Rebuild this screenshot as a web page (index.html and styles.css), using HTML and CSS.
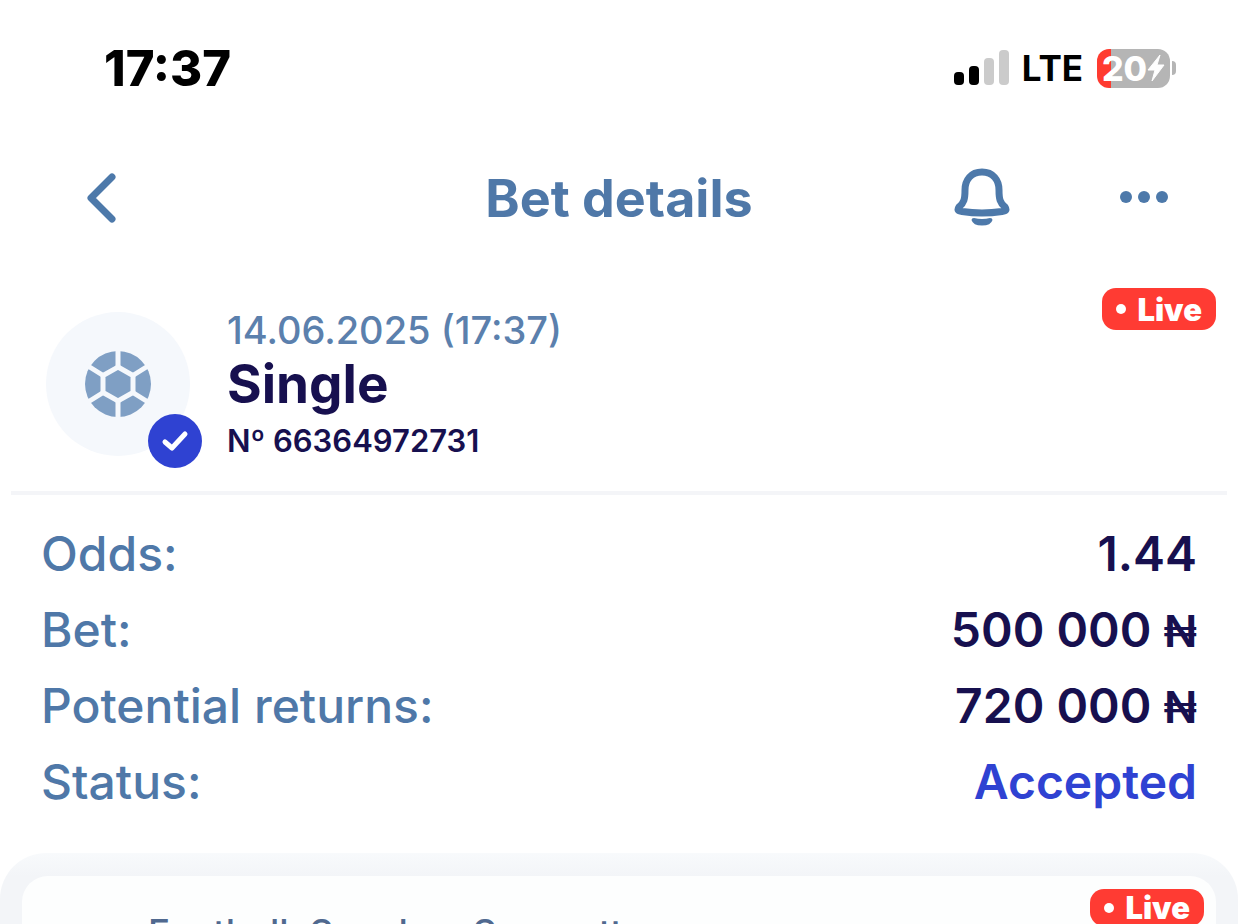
FILE: index.html
```html
<!DOCTYPE html>
<html lang="en">

<head>
    <meta charset="UTF-8">
    <meta name="viewport" content="width=device-width, initial-scale=1.0">
    <title>Bet details</title>
    <link rel="stylesheet" href="styles.css">
</head>

<body>
    <div class="page">
        <div class="status-bar">
            <span class="clock">17:37</span>
            <div class="indicators">
                <svg class="signal" viewBox="0 0 56 36" width="56" height="36">
                    <rect x="0" y="22" width="10" height="13" rx="4" fill="#000"/>
                    <rect x="15" y="16" width="10" height="19" rx="4" fill="#000"/>
                    <rect x="30" y="8" width="10" height="27" rx="4" fill="#cbcbcb"/>
                    <rect x="45" y="0" width="10" height="35" rx="4" fill="#cbcbcb"/>
                </svg>
                <span class="network">LTE</span>
                <div class="battery">
                    <div class="battery-body">
                        <span>20</span>
                        <svg viewBox="0 0 18 28" width="18" height="28">
                            <path d="M13 1 L1 16 H8 L5 27 L17 11 H10 Z" fill="#fff" stroke="#fff" stroke-linejoin="round"/>
                        </svg>
                    </div>
                    <div class="battery-cap"></div>
                </div>
            </div>
        </div>

        <header class="header">
            <button class="icon-button back" type="button" aria-label="Back">
                <svg viewBox="0 0 32 52" width="32" height="52">
                    <path d="M26 5 L5 26 L26 47" fill="none" stroke="#4d79aa" stroke-width="7" stroke-linecap="round" stroke-linejoin="round"/>
                </svg>
            </button>
            <h1>Bet details</h1>
            <div class="header-actions">
                <button class="icon-button" type="button" aria-label="Notifications">
                    <svg viewBox="0 0 56 60" width="56" height="60">
                        <path d="M28 4 C17 4 11 12 11 22 C11 31 10 35 5 39 C3 42 4 43 8 43.500 Q28 46.500 48 43.500 C52 43 53 42 51 39 C46 35 45 31 45 22 C45 12 39 4 28 4 Z" fill="none" stroke="#4d79aa" stroke-width="7" stroke-linejoin="round"/>
                        <path d="M20 50 Q28 52 36 50 Q38.500 50 38.500 52 Q37 57.500 28 57.500 Q19 57.500 17.500 52 Q17.500 50 20 50 Z" fill="#4d79aa"/>
                    </svg>
                </button>
                <button class="icon-button" type="button" aria-label="More">
                    <svg viewBox="0 0 48 14" width="48" height="14">
                        <circle cx="6" cy="6" r="6" fill="#4d79aa"/>
                        <circle cx="24" cy="6" r="6" fill="#4d79aa"/>
                        <circle cx="42" cy="6" r="6" fill="#4d79aa"/>
                    </svg>
                </button>
            </div>
        </header>

        <section class="summary">
            <div class="sport">
                <svg viewBox="0 0 68 68" width="68" height="68">
                    <circle cx="34" cy="34" r="33" fill="#7f9fc4"/>
                    <path d="M34 18 V0 M34 50 V68 M20 26 L4 16 M48 26 L64 16 M20 42 L4 52 M48 42 L64 52" stroke="#f5f8fc" stroke-width="5"/>
                    <path d="M34 17 L49 25.500 V42.500 L34 51 L19 42.500 V25.500 Z" fill="#7f9fc4" stroke="#f5f8fc" stroke-width="5"/>
                </svg>
                <div class="sport-check">
                    <svg viewBox="0 0 28 22" width="28" height="22">
                        <path d="M4 12 L11 18 L24 4" fill="none" stroke="#fff" stroke-width="5" stroke-linecap="round" stroke-linejoin="round"/>
                    </svg>
                </div>
            </div>
            <div class="summary-text">
                <p class="date">14.06.2025 (17:37)</p>
                <h2>Single</h2>
                <p class="number">Nº 66364972731</p>
            </div>
            <span class="live">Live</span>
        </section>

        <dl class="details">
            <div class="row">
                <dt>Odds:</dt>
                <dd>1.44</dd>
            </div>
            <div class="row">
                <dt>Bet:</dt>
                <dd>500 000 <span class="currency">₦</span></dd>
            </div>
            <div class="row">
                <dt>Potential returns:</dt>
                <dd>720 000 <span class="currency">₦</span></dd>
            </div>
            <div class="row">
                <dt>Status:</dt>
                <dd class="accepted">Accepted</dd>
            </div>
        </dl>

        <section class="events">
            <div class="event">
                <p class="league">Football. Sweden. Superettan</p>
                <span class="live live-small">Live</span>
            </div>
        </section>
    </div>
</body>

</html>
```

FILE: styles.css
```css
* {
    box-sizing: border-box;
}

body {
    margin: 0;
    background-color: #fff;
    font-family: Inter, "Liberation Sans", sans-serif;
    color: #17104f;
}

h1,
h2,
p,
dl,
dd {
    margin: 0;
}

.page {
    height: 100vh;
    overflow: hidden;
}

.status-bar {
    display: flex;
    justify-content: space-between;
    align-items: center;
    height: 136px;
    padding: 0 62px 0 104px;
    color: #000;
}

.clock {
    font-size: 49px;
    font-weight: 800;
}

.indicators {
    display: flex;
    align-items: center;
}

.network {
    margin: 0 14px 0 12px;
    font-size: 35px;
    font-weight: 700;
}

.battery {
    display: flex;
    align-items: center;
    gap: 2px;
}

.battery-body {
    display: flex;
    align-items: center;
    justify-content: center;
    width: 73px;
    height: 39px;
    border-radius: 12px;
    background: linear-gradient(to right, #ff3b30 14px, #b5b5b5 14px);
    color: #fff;
    font-size: 34px;
    font-weight: 800;
}

.battery-cap {
    width: 4px;
    height: 14px;
    border-radius: 0 6px 6px 0;
    background-color: #b5b5b5;
}

.header {
    display: grid;
    grid-template-columns: 1fr auto 1fr;
    align-items: center;
    height: 124px;
    padding: 0 70px;
}

.header h1 {
    color: #4f78a8;
    font-size: 52px;
    font-weight: 700;
}

.icon-button {
    display: flex;
    justify-self: start;
    padding: 0;
    border: none;
    background: none;
    cursor: pointer;
}

.back {
    padding-left: 16px;
}

.header-actions {
    display: flex;
    justify-content: flex-end;
    align-items: center;
    gap: 110px;
}

.summary {
    display: flex;
    align-items: flex-start;
    height: 235px;
    margin: 0 11px;
    padding: 28px 11px 0 35px;
    border-bottom: 4px solid #f4f5f8;
}

.sport {
    position: relative;
    display: flex;
    align-items: center;
    justify-content: center;
    width: 144px;
    height: 144px;
    margin-top: 24px;
    border-radius: 50%;
    background-color: #f5f8fc;
}

.sport-check {
    position: absolute;
    right: -12px;
    bottom: -12px;
    display: flex;
    align-items: center;
    justify-content: center;
    width: 54px;
    height: 54px;
    border-radius: 50%;
    background-color: #2f42d2;
}

.summary-text {
    flex: 1;
    margin-top: 20px;
    padding-left: 37px;
}

.date {
    color: #5b80ad;
    font-size: 38px;
    font-weight: 500;
    line-height: 44px;
}

.summary-text h2 {
    font-size: 53px;
    font-weight: 700;
    line-height: 64px;
}

.number {
    font-size: 31px;
    font-weight: 600;
    line-height: 50px;
}

.live {
    display: flex;
    align-items: center;
    gap: 11px;
    height: 42px;
    padding: 0 14px;
    border-radius: 14px;
    background-color: #ff3b33;
    color: #fff;
    font-size: 31px;
    font-weight: 900;
}

.live-small {
    height: 37px;
}

.live::before {
    content: "";
    width: 10px;
    height: 10px;
    border-radius: 50%;
    background-color: #fff;
}

.details {
    padding: 21px 41px 33px;
    font-size: 48px;
}

.row {
    display: flex;
    justify-content: space-between;
    line-height: 76px;
}

.row dt {
    color: #4f78a8;
    font-weight: 500;
}

.row dd {
    font-weight: 600;
}

.row .accepted {
    color: #2f42d2;
}

.currency {
    font-size: 44px;
    line-height: 1;
}

.events {
    padding: 23px 22px;
    border-radius: 46px 46px 0 0;
    background: linear-gradient(to bottom, #f8fafc, #f3f5f8 23px);
}

.event {
    display: flex;
    justify-content: space-between;
    align-items: flex-start;
    min-height: 240px;
    padding: 13px 12px 0 126px;
    border-radius: 26px;
    background-color: #fdfefe;
}

.league {
    padding-top: 22px;
    color: #50698f;
    font-size: 37px;
    font-weight: 500;
    line-height: 44px;
}
```
